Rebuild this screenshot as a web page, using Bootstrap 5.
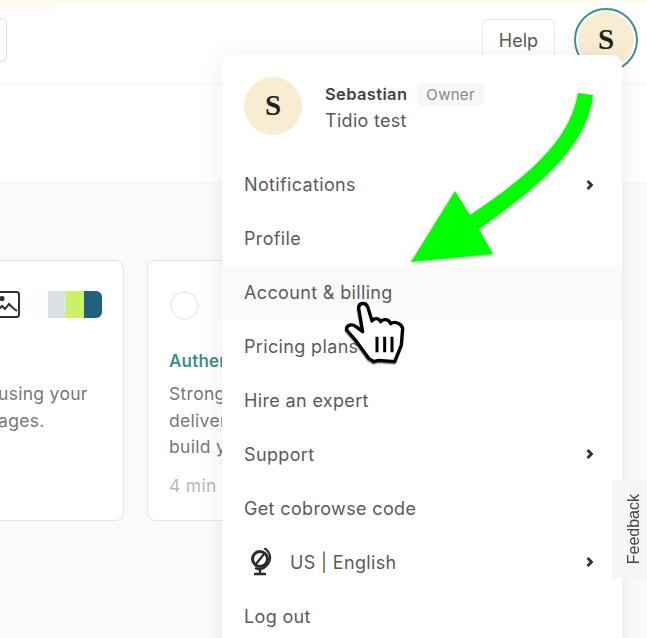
<!DOCTYPE html>
<html lang="en"><head><meta charset="utf-8"><title>Menu</title>
<link href="https://cdn.jsdelivr.net/npm/bootstrap@5.3.0/dist/css/bootstrap.min.css" rel="stylesheet">
<style>
html,body{height:638px;overflow:hidden}
body{background:#f9fafa;font-family:"Inter","Noto Sans",sans-serif;color:#5a5a5a;position:relative;font-size:17px}
.strip{height:2px;background:#fffdea}
.top-bar{height:82px;background:#fff;border-bottom:1px solid #f3f3f3}
.ghost{width:55px;height:13px;background:#fffcf8}
.ghost-input{width:7px;height:44px;margin-top:3px;border:1px solid #dcdcdc;border-left:0;border-radius:0 6px 6px 0}
.help-btn{width:73px;height:44px;margin-top:17px;margin-right:19px;border:1px solid #e8e8e8;border-radius:6px;font-size:18px;color:#5a5a5a;background:#fff;padding:0;line-height:42px}
.ava{border-radius:50%;background:#f8edd3;font-family:"Liberation Serif",serif;font-weight:700;color:#222;display:flex;align-items:center;justify-content:center;flex:none}
.ava-top{width:64px;height:64px;margin-top:6px;margin-right:9px;border:2.5px solid #3f8f90;padding:2px;background-clip:content-box;font-size:29px}
.sub-bar{height:99px;background:#fff;border-bottom:1px solid #f3f3f3}
.cards{padding-top:77px;gap:23px}
.tile{height:261px;border:1px solid #e6e6e6;border-radius:8px;background:#fff;flex:none;position:relative}
.tile-a{width:134px;margin-left:-10px;padding:30px 0 0 7px}
.tile-b{width:300px;padding:30px 0 0 21px}
.pic-row{height:27px;gap:10px;margin-left:-8px}
.swatch{width:18px;height:27px}
.sw1{background:#fdfdfd}.sw2{background:#dde1e4}.sw3{background:#c9f265}.sw4{background:#22607f;border-radius:0 6px 6px 0}
.ring{width:29px;height:29px;margin-left:1px;border:2px solid #efefef;border-radius:50%}
.tile-title{color:#3d8f8c;font-weight:600;font-size:17px;letter-spacing:.2px;line-height:27px;margin:28px 0 0}
.tile-text{line-height:26.5px;color:#777;margin:6px 0 0;white-space:nowrap;font-size:17.5px;letter-spacing:.3px}
.tile-a .tile-text{margin-top:63px}
.tile-meta{color:#b8b8b8;margin-top:11px;line-height:27px;font-size:17.5px;letter-spacing:.3px}
.acct-menu{position:absolute;left:222px;top:55px;width:400px;height:620px;background:#fff;border-radius:10px;box-shadow:0 2px 24px rgba(0,0,0,.08)}
.acct-head{height:103px;padding:22px 22px 0}
.ava-menu{width:58px;height:58px;font-size:29px}
.acct-name{font-weight:600;font-size:16.5px;letter-spacing:.35px;color:#444;line-height:24px}
.acct-org{font-size:18px;letter-spacing:.3px;line-height:30px;color:#5a5a5a}
.owner{background:#f7f7f7;color:#888;font-size:15px;font-weight:400;letter-spacing:.3px;padding:3px 9px;margin-left:10px;border-radius:5px;line-height:17px}
.acct-text{margin-left:7px;padding-top:5px}
.acct-row{height:53.9px;border:0;padding:0 26px 0 22px;color:#5a5a5a;font-size:18px;letter-spacing:.35px;display:flex;align-items:center;justify-content:space-between;background:transparent}
.acct-row.hov{background:#fbfbfb}
.feedback{position:absolute;left:612px;top:480px;width:35px;height:98px;padding-left:9px;background:#f5f5f5;font-family:"Liberation Sans",sans-serif;font-size:16px;color:#444;display:flex;align-items:center;justify-content:center}
.feedback span{writing-mode:vertical-rl;transform:rotate(180deg)}
.overlay{position:absolute;left:0;top:0;pointer-events:none}
</style></head>
<body>
<div class="strip"></div>
<header class="top-bar d-flex justify-content-between">
  <div><div class="ghost"></div><div class="ghost-input"></div></div>
  <div class="d-flex align-items-start">
    <button class="btn help-btn">Help</button>
    <div class="ava ava-top">S</div>
  </div>
</header>
<div class="sub-bar"></div>
<main class="d-flex cards">
  <section class="tile tile-a">
    <div class="d-flex pic-row">
      <svg width="30" height="27" viewBox="0 0 30 27" fill="none" stroke="#333" stroke-width="2"><rect x="1" y="1" width="28" height="25" rx="2.5"/><path d="M9 18l3-3 3 3 4-5 4 4 4 3"/><circle cx="12" cy="7.5" r="1.6" fill="#333"/></svg>
      <div class="d-flex"><div class="swatch sw1"></div><div class="swatch sw2"></div><div class="swatch sw3"></div><div class="swatch sw4"></div></div>
    </div>
    <p class="tile-text">using your<br>ages.</p>
  </section>
  <section class="tile tile-b">
    <div class="ring"></div>
    <h3 class="tile-title">Authentication</h3>
    <p class="tile-text">Strong authentication<br>deliverability and<br>build your reputation</p>
    <div class="tile-meta">4 min read</div>
  </section>
</main>

<nav class="acct-menu">
  <div class="acct-head d-flex gap-3">
    <div class="ava ava-menu">S</div>
    <div class="acct-text">
      <div class="d-flex align-items-center"><span class="acct-name">Sebastian</span><span class="badge owner">Owner</span></div>
      <div class="acct-org">Tidio test</div>
    </div>
  </div>
  <div class="list-group list-group-flush">
    <div class="list-group-item acct-row">Notifications<svg width="12" height="14" viewBox="0 0 12 14" fill="none" stroke="#333" stroke-width="2.8"><path d="M3.5 3l4 4-4 4"/></svg></div>
    <div class="list-group-item acct-row">Profile</div>
    <div class="list-group-item acct-row hov">Account &amp; billing</div>
    <div class="list-group-item acct-row">Pricing plans</div>
    <div class="list-group-item acct-row">Hire an expert</div>
    <div class="list-group-item acct-row">Support<svg width="12" height="14" viewBox="0 0 12 14" fill="none" stroke="#333" stroke-width="2.8"><path d="M3.5 3l4 4-4 4"/></svg></div>
    <div class="list-group-item acct-row">Get cobrowse code</div>
    <div class="list-group-item acct-row"><span class="d-flex align-items-center gap-3">
      <svg class="ms-1" width="26" height="28" viewBox="0 0 26 28" fill="none" stroke="#2b2b2b"><circle cx="12" cy="11" r="7.5" stroke-width="3"/><path d="M8 16L16 6" stroke-width="2.2"/><path d="M16 0c6 3 8 11 4 16s-9 6-13 4" stroke-width="2.2"/><path d="M12 20v5M6 26h12" stroke-width="2.4"/></svg>US | English</span><svg width="12" height="14" viewBox="0 0 12 14" fill="none" stroke="#333" stroke-width="2.8"><path d="M3.5 3l4 4-4 4"/></svg></div>
    <div class="list-group-item acct-row">Log out</div>
  </div>
</nav>
<aside class="feedback"><span>Feedback</span></aside>

<svg class="overlay" width="647" height="638" viewBox="0 0 647 638">
  <defs><filter id="soft" x="-20%" y="-20%" width="140%" height="140%"><feDropShadow dx="0" dy="1" stdDeviation="1.5" flood-color="#000" flood-opacity=".25"/></filter>
  <filter id="hs" x="-30%" y="-30%" width="160%" height="160%"><feDropShadow dx="-1" dy="4" stdDeviation="2" flood-color="#000" flood-opacity=".45"/></filter></defs>
  <path filter="url(#soft)" fill="#00ff00" d="M578 93L593 95C588 140 552 178 479 229L493 254L411 262L455 191L470 215C530 175 570 140 578 93Z"/>
  <g transform="translate(342 295) scale(.3333)" filter="url(#hs)">
    <path fill="#fff" stroke="#000" stroke-width="10" stroke-linejoin="round" d="M50 40C50 22 72 20 78 38L90 78C96 68 110 68 116 80C124 70 140 72 146 86C156 78 178 84 182 100L178 150L164 185L158 200L110 196L95 200L80 190L40 135L14 105C12 90 30 85 42 95L62 110Z"/>
    <path fill="none" stroke="#000" stroke-width="9" d="M105 125V172M128 125V172M150 125V172"/>
  </g>
</svg>
<script src="https://cdn.jsdelivr.net/npm/bootstrap@5.3.0/dist/js/bootstrap.bundle.min.js"></script>
</body></html>
